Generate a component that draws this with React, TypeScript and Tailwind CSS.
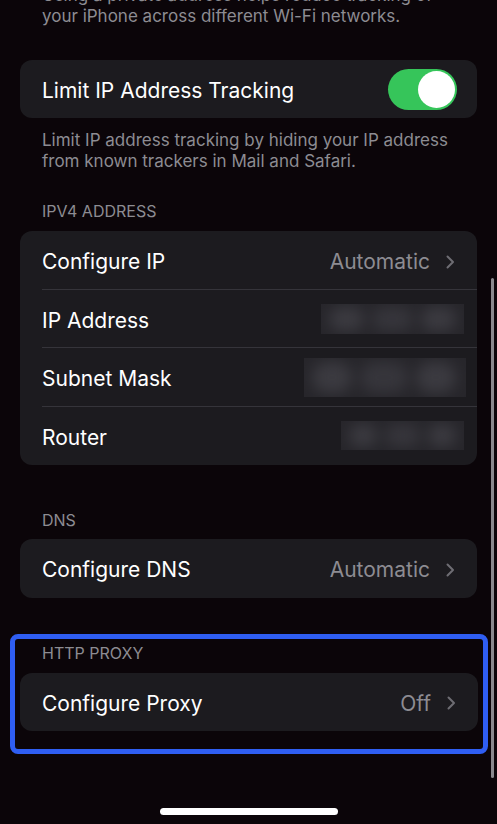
import React from 'react'

const font = { fontFamily: 'Inter, "Noto Sans", sans-serif' }

function Chevron() {
  return (
    <svg width="9" height="14" viewBox="0 0 9 14" className="ml-4 shrink-0">
      <path d="M1.5 1.5 L7 7 L1.5 12.5" fill="none" stroke="#6e6d73" strokeWidth="2" strokeLinecap="round" strokeLinejoin="round" />
    </svg>
  )
}

// blurred-out value, as in the screenshot
function Blur({ w, h }: { w: string; h: string }) {
  return (
    <div className={`${w} ${h} -mt-[3px] overflow-hidden bg-[#27262b]`}>
      <div className="flex h-full items-center gap-2 px-2 blur-[7px]">
        <div className="h-4/5 w-10 rounded-full bg-[#3b3a40]" />
        <div className="h-4/5 w-12 rounded-full bg-[#36353b]" />
        <div className="h-4/5 w-10 rounded-full bg-[#3b3a40]" />
      </div>
    </div>
  )
}

function Row({ label, value, chevron, right, divider, pr = 'pr-[22px]' }: { label: string; value?: string; chevron?: boolean; right?: React.ReactNode; divider?: boolean; pr?: string }) {
  return (
    <div className={`relative flex h-[58.5px] items-center pl-[22px] pt-[3px] ${pr}`}>
      <span className="flex-1 text-[21px] text-white">{label}</span>
      {value && <span className="text-[21px] text-[#8d8c92]">{value}</span>}
      {chevron && <Chevron />}
      {right}
      {divider && <div className="absolute bottom-0 left-[22px] right-0 h-px bg-[#35343a]" />}
    </div>
  )
}

function Header({ children }: { children: string }) {
  return <div className="pl-[22px] text-[16px] leading-5 text-[#8d8c92]">{children}</div>
}

export default function App() {
  return (
    <div className="relative h-[824px] w-full overflow-hidden bg-[#0b0509]" style={font}>
      <div className="px-5">
        <p className="-mt-[15px] whitespace-nowrap pl-[22px] text-[17px] leading-[21px] text-[#8d8c92]">
          Using a private address helps reduce tracking of
          <br />
          your iPhone across different Wi-Fi networks.
        </p>

        <div className="mt-[33px] flex h-[58px] items-center rounded-xl bg-[#1c1b1f] pl-[22px] pr-5">
          <span className="flex-1 pt-[3px] text-[21px] text-white">Limit IP Address Tracking</span>
          <div className="flex h-[41px] w-[69px] items-center justify-end rounded-full bg-[#36c55a] pr-[2px]">
            <div className="h-[37px] w-[37px] rounded-full bg-white" />
          </div>
        </div>

        <p className="mt-[12px] whitespace-nowrap pl-[22px] text-[17px] leading-[21px] text-[#8d8c92]">
          Limit IP address tracking by hiding your IP address
          <br />
          from known trackers in Mail and Safari.
        </p>

        <div className="mt-[29px]">
          <Header>IPV4 ADDRESS</Header>
        </div>
        <div className="mt-[10px] rounded-xl bg-[#1c1b1f]">
          <Row label="Configure IP" value="Automatic" chevron divider />
          <Row label="IP Address" pr="pr-[13px]" right={<Blur w="w-[143px]" h="h-[30px]" />} divider />
          <Row label="Subnet Mask" pr="pr-[11px]" right={<Blur w="w-[162px]" h="h-[39px]" />} divider />
          <Row label="Router" pr="pr-[13px]" right={<Blur w="w-[123px]" h="h-[29px]" />} />
        </div>

        <div className="mt-[45px]">
          <Header>DNS</Header>
        </div>
        <div className="mt-[9px] rounded-xl bg-[#1c1b1f]">
          <Row label="Configure DNS" value="Automatic" chevron />
        </div>

        <div className="-ml-[10px] -mr-[11px] mt-9 rounded-lg border-[5px] border-[#2f5ef2] px-[5px] pb-[18px] pt-1">
          <Header>HTTP PROXY</Header>
          <div className="mt-[10px] rounded-xl bg-[#1c1b1f]">
            <Row label="Configure Proxy" value="Off" chevron />
          </div>
        </div>
      </div>

      <div className="absolute left-[491px] top-[278px] h-[500px] w-[3px] rounded-full bg-[#8a898e]" />
      <div className="absolute left-[160px] top-[808px] h-[7px] w-[178px] rounded-full bg-white" />
    </div>
  )
}
